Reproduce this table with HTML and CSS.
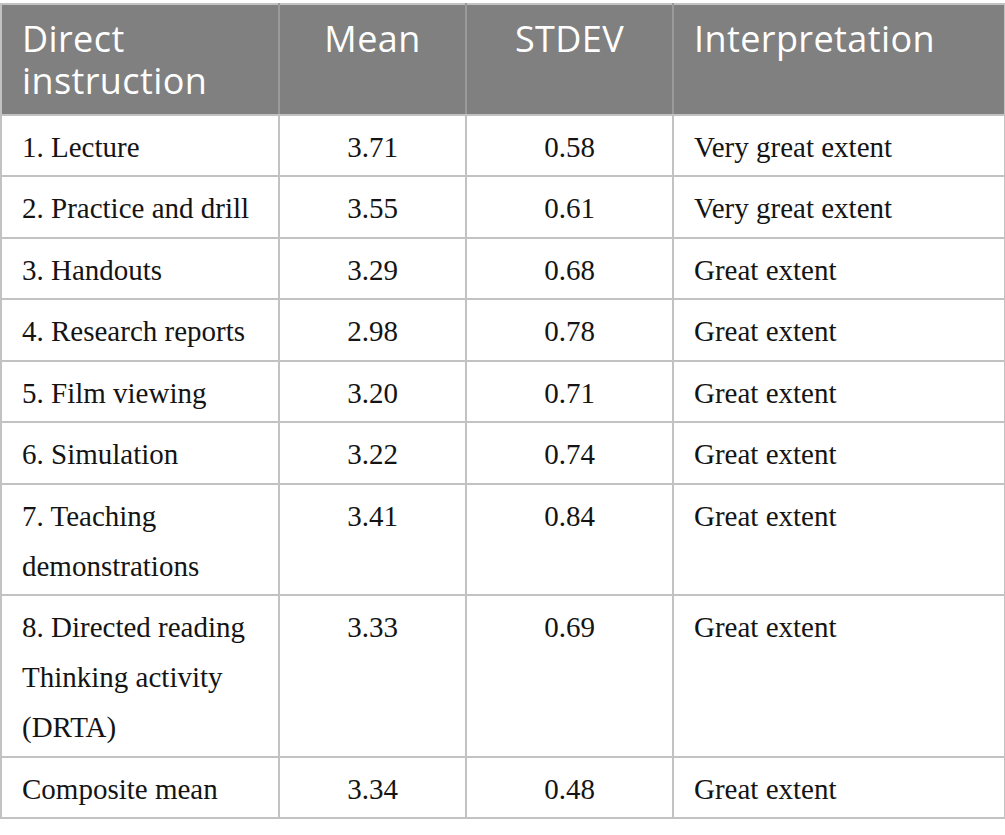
FILE: index.html
```html
<!DOCTYPE html>
<html>
<head>
<meta charset="utf-8">
<link rel="stylesheet" href="styles.css">
</head>
<body>
<table class="data">
  <colgroup>
    <col class="c1"><col class="c2"><col class="c3"><col class="c4">
  </colgroup>
  <thead>
    <tr>
      <th>Direct instruction</th>
      <th class="ctr">Mean</th>
      <th class="ctr">STDEV</th>
      <th>Interpretation</th>
    </tr>
  </thead>
  <tbody>
    <tr><td>1. Lecture</td><td class="ctr">3.71</td><td class="ctr">0.58</td><td>Very great extent</td></tr>
    <tr><td>2. Practice and drill</td><td class="ctr">3.55</td><td class="ctr">0.61</td><td>Very great extent</td></tr>
    <tr><td>3. Handouts</td><td class="ctr">3.29</td><td class="ctr">0.68</td><td>Great extent</td></tr>
    <tr><td>4. Research reports</td><td class="ctr">2.98</td><td class="ctr">0.78</td><td>Great extent</td></tr>
    <tr><td>5. Film viewing</td><td class="ctr">3.20</td><td class="ctr">0.71</td><td>Great extent</td></tr>
    <tr><td>6. Simulation</td><td class="ctr">3.22</td><td class="ctr">0.74</td><td>Great extent</td></tr>
    <tr><td>7. Teaching demonstrations</td><td class="ctr">3.41</td><td class="ctr">0.84</td><td>Great extent</td></tr>
    <tr><td>8. Directed reading Thinking activity (DRTA)</td><td class="ctr">3.33</td><td class="ctr">0.69</td><td>Great extent</td></tr>
    <tr><td>Composite mean</td><td class="ctr">3.34</td><td class="ctr">0.48</td><td>Great extent</td></tr>
  </tbody>
</table>
</body>
</html>
```
FILE: styles.css
```css
html, body {
  margin: 0;
  padding: 0;
  background: #ffffff;
}
body {
  padding-top: 3px;
}
.data {
  width: 1004px;
  border-collapse: collapse;
  table-layout: fixed;
  border: 2px solid #c2c2c2;
}
.c1 { width: 278px; }
.c2 { width: 187px; }
.c3 { width: 207px; }
.c4 { width: 332px; }

.data th {
  background: #808080;
  color: #ffffff;
  font-family: "Open Sans", "Noto Sans", sans-serif;
  font-weight: 400;
  font-size: 36px;
  letter-spacing: 0.4px;
  line-height: 42px;
  text-align: left;
  vertical-align: top;
  padding: 13px 20px 12px 20px;
  border: 2px solid #c2c2c2;
  border-top: none;
  border-left-color: #9a9a9a;
  border-right-color: #9a9a9a;
}
.data th:first-child { border-left-color: #c2c2c2; }
.data th:last-child { border-right-color: #c2c2c2; }
.data td {
  font-family: "Liberation Serif", "Times New Roman", serif;
  font-size: 29px;
  line-height: 50px;
  color: #141414;
  vertical-align: top;
  padding: 6px 20px 3.45px 20px;
  border: 2px solid #c2c2c2;
}
.data .ctr { text-align: center; }
```
